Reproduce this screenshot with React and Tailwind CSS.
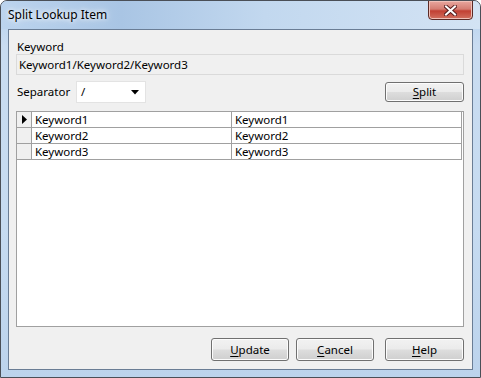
import { useState } from 'react'

const rows = [
  { id: 1, left: 'Keyword1', right: 'Keyword1' },
  { id: 2, left: 'Keyword2', right: 'Keyword2' },
  { id: 3, left: 'Keyword3', right: 'Keyword3' },
]

function WinButton({ children, className = '' }) {
  return (
    <button
      className={`h-full rounded-[3px] border border-[#707070] bg-[linear-gradient(to_bottom,#f2f2f2_0%,#ebebeb_48%,#dddddd_52%,#cfcfcf_100%)] text-[11.5px] leading-none text-black shadow-[inset_0_0_0_1px_#fcfcfc] ${className}`}
    >
      {children}
    </button>
  )
}

export default function App() {
  const [selected] = useState(1)

  return (
    <div
      className="flex h-[378px] w-[481px] flex-col overflow-hidden rounded-t-[7px] border border-[#4a4f57] bg-[linear-gradient(to_bottom,#b4cfec_0%,#c9dcf1_12%,#c6dbf1_60%,#bcd3ec_100%)] text-black"
      style={{ fontFamily: '"Noto Sans", "Open Sans", sans-serif' }}
    >
      {/* title bar */}
      <div className="relative flex h-[28px] shrink-0 items-center pl-[7px] bg-[linear-gradient(to_right,#bcd4ee_0%,#a9c5e4_25%,#c2d8ef_55%,#d3e3f4_100%)]">
        <span className="text-[12px] text-black [text-shadow:0_0_8px_#ffffff,0_0_4px_#ffffff]">Split Lookup Item</span>
        <div className="absolute right-[7px] top-[-1px] flex h-[20px] w-[45px] items-center justify-center rounded-b-[4px] border border-[#5b2a26] bg-[linear-gradient(to_bottom,#e8a79f_0%,#d47d72_45%,#c24033_55%,#d2705f_100%)] shadow-[inset_0_0_0_1px_#f0c0b8]">
          <svg width="13" height="11" viewBox="0 0 13 11">
            <path d="M2 1.5 L11 9.5 M11 1.5 L2 9.5" stroke="#5a2020" strokeWidth="4" strokeLinecap="square" />
            <path d="M2 1.5 L11 9.5 M11 1.5 L2 9.5" stroke="#ffffff" strokeWidth="2" strokeLinecap="square" />
          </svg>
        </div>
      </div>

      {/* client area */}
      <div className="mx-[7px] mb-[7px] flex flex-1 flex-col border border-[#6a7d95] bg-[#f0f0f0] pl-[7px] pr-[8px] pt-[9px] pb-[8px] text-[11.5px]">
        <div className="h-[15px] pl-[1px] leading-[15px]">Keyword</div>
        <div className="flex h-[21px] items-center border border-[#dadada] bg-[#f0f0f0] pl-[2px]">
          Keyword1/Keyword2/Keyword3
        </div>

        <div className="mt-[6px] flex h-[22px] items-center">
          <span className="w-[60px] pl-[1px]">Separator</span>
          <div className="flex h-[22px] w-[70px] items-center justify-between border border-[#e3e3e3] bg-white pl-[4px] pr-[6px]">
            <span>/</span>
            <svg width="8" height="5" viewBox="0 0 8 5">
              <path d="M0 0 H8 L4 4.5 Z" fill="#000" />
            </svg>
          </div>
          <div className="ml-auto h-[20px] w-[79px]">
            <WinButton className="w-full">
              <span className="underline underline-offset-2">S</span>plit
            </WinButton>
          </div>
        </div>

        {/* grid */}
        <div className="mt-[8px] h-[216px] border border-[#a0a0a0] bg-white pr-[1px]">
          {rows.map((r) => (
            <div key={r.id} className="flex h-[16px] border-b border-[#a0a0a0]">
              <div className="flex w-[15px] shrink-0 items-center justify-center border-r border-[#a0a0a0] bg-[#f0f0f0]">
                {r.id === selected && (
                  <svg width="5" height="9" viewBox="0 0 5 9">
                    <path d="M0 0 L5 4.5 L0 9 Z" fill="#000" />
                  </svg>
                )}
              </div>
              <div className="flex w-[200px] shrink-0 items-center border-r border-[#a0a0a0] pl-[3px] leading-none">
                {r.left}
              </div>
              <div className="flex flex-1 items-center border-r border-[#a0a0a0] pl-[3px] leading-none">
                {r.right}
              </div>
            </div>
          ))}
        </div>

        <div className="mt-[11px] flex h-[23px]">
          <WinButton className="ml-auto w-[78px]">
            <span className="underline underline-offset-2">U</span>pdate
          </WinButton>
          <WinButton className="ml-[7px] w-[78px]">
            <span className="underline underline-offset-2">C</span>ancel
          </WinButton>
          <WinButton className="ml-[11px] w-[79px]">
            <span className="underline underline-offset-2">H</span>elp
          </WinButton>
        </div>
      </div>
    </div>
  )
}
